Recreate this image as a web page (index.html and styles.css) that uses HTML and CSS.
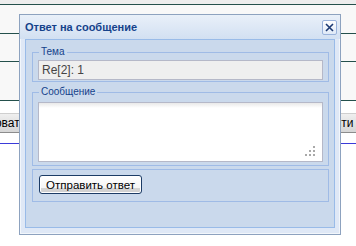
FILE: index.html
```html
<!DOCTYPE html>
<html lang="ru">
<head>
  <meta charset="UTF-8">
  <meta name="viewport" content="width=device-width, initial-scale=1.0">
  <title>Ответ на сообщение</title>
  <link rel="stylesheet" href="styles.css">
</head>
<body>
  <!-- page behind the dialog -->
  <div class="page">
    <div class="strip"></div>
    <div class="band band-a"></div>
    <div class="band band-b"></div>
    <div class="band band-c"></div>
    <div class="toolbar">
      <span class="tb-left"><span>Редактировать</span></span>
      <span></span>
      <span class="tb-right">Перейти к ответу</span>
    </div>
    <div class="blue-rule"></div>
  </div>

  <!-- reply window -->
  <div class="window">
    <div class="window-header">
      <span class="window-title">Ответ на сообщение</span>
      <button class="close-btn" type="button" title="Закрыть">
        <svg width="9" height="9" viewBox="0 0 9 9">
          <path d="M1 1 L8 8 M8 1 L1 8" stroke="#1d3a73" stroke-width="1.6" fill="none"/>
        </svg>
      </button>
    </div>
    <div class="window-body">
      <fieldset class="fs fs-subject">
        <legend>Тема</legend>
        <input class="field-input" type="text" value="Re[2]: 1" readonly>
      </fieldset>
      <fieldset class="fs fs-message">
        <legend>Сообщение</legend>
        <div class="message-wrap">
          <textarea class="field-area"></textarea>
          <svg class="grip" width="10" height="10" viewBox="0 0 10 10">
            <rect x="8" y="0" width="2" height="2" fill="#a9a9a9"/>
            <rect x="4" y="4" width="2" height="2" fill="#a9a9a9"/>
            <rect x="8" y="4" width="2" height="2" fill="#a9a9a9"/>
            <rect x="0" y="8" width="2" height="2" fill="#a9a9a9"/>
            <rect x="4" y="8" width="2" height="2" fill="#a9a9a9"/>
            <rect x="8" y="8" width="2" height="2" fill="#a9a9a9"/>
          </svg>
        </div>
      </fieldset>
      <fieldset class="fs fs-actions">
        <button class="send-btn" type="button">Отправить ответ</button>
      </fieldset>
    </div>
  </div>
</body>
</html>
```

FILE: styles.css
```css
body {
  margin: 0;
  background: #fff;
  font-family: "Liberation Sans", Arial, sans-serif;
  overflow: hidden;
}
.strip {
  height: 4px;
  background: #ededed;
  border-bottom: 1px solid #24504c;
}
.band {
  background: #f8f8f8;
  border-bottom: 1px solid #24504c;
}
.band-a {
  height: 28px;
}
.band-b {
  height: 27px;
}
.band-c {
  height: 38px;
}
.toolbar {
  margin-top: 12px;
  height: 18px;
  border-top: 1px solid #cfcfcf;
  border-bottom: 1px solid #8c8c8c;
  background: linear-gradient(#efefef, #d6d6d6);
  display: grid;
  grid-template-columns: 26px 1fr 50px;
  font-size: 12px;
  line-height: 18px;
  color: #000;
  white-space: nowrap;
}
.tb-left {
  display: flex;
  justify-content: flex-end;
  overflow: hidden;
}
.blue-rule {
  margin-top: 10px;
  height: 1px;
  background: #3b3bd9;
}

.window {
  position: absolute;
  left: 19px;
  top: 14px;
  width: 322px;
  box-sizing: border-box;
  border: 1px solid #8da2bf;
  box-shadow: inset 0 0 0 1px #f2f6fb;
  background: #dfe8f6;
}
.window-header {
  height: 24px;
  display: flex;
  align-items: center;
  justify-content: space-between;
  padding: 0 3px 0 5px;
  background: linear-gradient(#e9f0f9, #d2e0f2);
}
.window-title {
  font-size: 11px;
  font-weight: bold;
  color: #15428b;
}
.close-btn {
  width: 15px;
  height: 15px;
  box-sizing: border-box;
  padding: 0;
  border: 1px solid #9ab3db;
  border-radius: 2px;
  background: linear-gradient(#ffffff, #dfe9f7);
  display: flex;
  align-items: center;
  justify-content: center;
}
.window-body {
  margin: 0 5px 6px 5px;
  border: 1px solid #99bbe8;
  background: #cad9ec;
  padding: 6px 5px 25px 6px;
}

.fs {
  margin: 0;
  border: 1px solid #9fbbe6;
  min-inline-size: 0;
}
.fs legend {
  padding: 0 2px;
  margin-left: 1px;
  font-size: 10px;
  line-height: 12px;
  color: #15428b;
}
.fs-subject {
  padding: 2px 5px 1px 5px;
  margin-bottom: 4px;
}
.fs-message {
  padding: 4px 5px 3px 5px;
  margin-bottom: 3px;
}
.fs-actions {
  padding: 5px 5px 7px 6px;
}
.field-input {
  display: block;
  width: 100%;
  height: 20px;
  box-sizing: border-box;
  margin: 0;
  padding: 0 3px;
  border: 1px solid #b5b8c8;
  background: #efefef;
  font: 12px "Liberation Sans", Arial, sans-serif;
  color: #444;
  outline: none;
}
.message-wrap {
  position: relative;
}
.field-area {
  display: block;
  width: 100%;
  height: 60px;
  box-sizing: border-box;
  margin: 0;
  padding: 2px 3px;
  border: 1px solid #b5b8c8;
  background: linear-gradient(#e9e9e9, #fff 5px);
  resize: none;
  font: 12px "Liberation Sans", Arial, sans-serif;
  outline: none;
}
.grip {
  position: absolute;
  right: 8px;
  bottom: 6px;
}
.send-btn {
  display: block;
  width: 103px;
  height: 19px;
  padding: 0;
  border: 1px solid #1c3c66;
  border-radius: 3px;
  background: linear-gradient(#ffffff, #f5f5f5 70%, #d4d4d4 72%, #d0d0d0);
  box-shadow: inset 0 0 0 1px #fff;
  font: 11.5px "Liberation Sans", Arial, sans-serif;
  color: #000;
}
```
